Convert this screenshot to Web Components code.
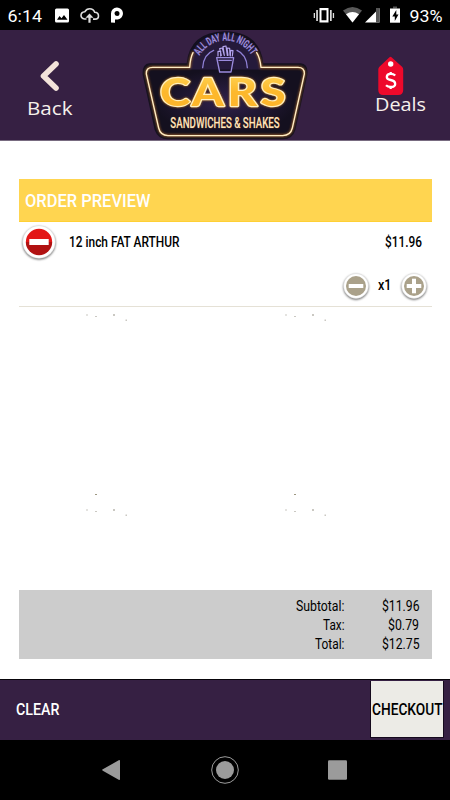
<!DOCTYPE html>
<html lang="en"><head><meta charset="utf-8"><title>Order preview</title>
<style>html,body{margin:0;background:#fff}body{width:450px;height:800px;overflow:hidden}</style></head>
<body><order-app></order-app>
<script>
const define=(name,html,setup)=>customElements.define(name,class extends HTMLElement{
  constructor(){super();this.attachShadow({mode:'open'}).innerHTML=html}
  connectedCallback(){if(setup)setup(this,this.shadowRoot)}
});

/* A line of condensed type, fitted to the width in "w"; "b" is the baseline inside a box of height "h". */
define('fit-text','<style>:host{display:block;flex:none;font-family:Roboto,"Liberation Sans",sans-serif}svg{display:block;overflow:visible}</style><svg><text fill="currentColor" lengthAdjust="spacingAndGlyphs"></text></svg>',(el,root)=>{
  const a=n=>el.getAttribute(n),svg=root.querySelector('svg'),t=root.querySelector('text');
  svg.setAttribute('width',a('w'));svg.setAttribute('height',a('h'));
  t.setAttribute('y',a('b'));t.setAttribute('textLength',a('w'));
  t.setAttribute('font-size',a('size'));t.setAttribute('font-weight',a('weight')||500);
  t.textContent=a('text');
});

define('status-bar',`<style>:host{display:block;height:30px;background:#000}svg{display:block}</style>
<svg width="450" height="30" font-family="Roboto,sans-serif" font-size="16.5" font-weight="400" fill="#fff">
<text x="7.5" y="21.5" textLength="34.5" lengthAdjust="spacingAndGlyphs">6:14</text>
<path fill-rule="evenodd" d="M56.5 8.500h11q1.500 0 1.500 1.500v11q0 1.500-1.500 1.500h-11q-1.500 0-1.500-1.500v-11q0-1.500 1.500-1.500zM57 19.700h10.500l-3.500-4.700-2.500 3.200-2-2.200z"/>
<path d="M86.500 19H84.500q-3.500-.5-3.500-3.700 0-3 3.700-3.500 1.800-3 5-3 3.700 0 5 3.500 3.800.2 3.800 3.600 0 3-3.500 3.200h-2" fill="none" stroke="#ddd" stroke-width="1.600"/>
<path d="M89.500 13.500l4 4.200h-2.900v5h-2.200v-5h-2.900z" fill="#ddd"/>
<path fill-rule="evenodd" d="M111 22.500V13.500a6 6 0 1 1 6.800 6H115v3.200zM117 11a2.500 2.500 0 1 0 .01 5 2.500 2.500 0 0 0 0-5z"/>
<path fill-rule="evenodd" d="M319.500 8h9v14.500h-9zM321.500 10.300v10h5v-10z"/><path d="M316.200 10h1.700v11h-1.700zM313.700 13h1.300v5h-1.300zM330 10h1.700v11H330zM332.800 13h1.300v5h-1.300z" fill="#ddd"/>
<path d="M343 10.500Q352.500 3.500 362 10.500L352.500 22.500z" fill="#595959"/><path d="M346 14.200q6.500-4.400 13 0L352.500 22.500z"/>
<path d="M365 22.500L379.500 8v14.500z"/><path d="M376 8H379.500v14.500H376z" fill="#555"/>
<path d="M393 6.500h4V8.500h-4z" fill="#555"/><path d="M390 8.500h10v14.200h-10z"/><path d="M396.300 10l-4 6.500h2.500v4.500l3.700-6.500h-2.200z" fill="#000"/>
<text x="409.500" y="21.500" textLength="33" lengthAdjust="spacingAndGlyphs">93%</text>
</svg>`);

define('brand-logo',`<style>:host{display:block;width:170px;height:110px}svg{display:block}</style>
<svg width="170" height="110" viewBox="0 6 510 330">
<defs><linearGradient id="g" x1="0" y1="0" x2="0" y2="1"><stop offset="0" stop-color="#ffd95c"/><stop offset=".5" stop-color="#fdb82c"/><stop offset="1" stop-color="#fdb42a"/></linearGradient>
<radialGradient id="d"><stop offset="0" stop-color="#30214c"/><stop offset="1" stop-color="#14101f"/></radialGradient>
<filter id="b" x="-20%" y="-20%" width="140%" height="140%"><feGaussianBlur stdDeviation="3"/></filter></defs>
<path d="M28 106H140Q150 12 255 10Q360 12 370 106H482Q506 108 502 140L466 306Q458 334 428 334H84Q54 334 44 306L8 140Q6 108 28 106z" fill="#14101f"/>
<path d="M155 80Q174 20 255 18Q336 20 352 80L365 125H145z" fill="#251a3b"/>
<path d="M40 125H470L440 318H70z" fill="url(#d)"/>
<g fill="none" stroke-linecap="round" stroke-linejoin="round">
<path d="M159 74Q151 90 149 118H38Q18 118 19 138L56 300Q61 322 84 323H428Q452 322 457 300L493 138Q494 118 474 118H363Q360 90 350 74" stroke="#8a5526" stroke-width="8" filter="url(#b)"/>
<path d="M159 74Q151 90 149 118H38Q18 118 19 138L56 300Q61 322 84 323H428Q452 322 457 300L493 138Q494 118 474 118H363Q360 90 350 74" stroke="#ffedc5" stroke-width="4"/>
<path d="M188 119Q190 79 221 67M322 119Q320 79 291 67" stroke="#8f80d5" stroke-width="4"/>
<path d="M230 89H281L273 132H239zM237 97H274" stroke="#9a8bdd" stroke-width="4"/>
<path d="M234 84V70h8v14M244 82L239 62l8-2 6 22M253 82L249 56l9-2 4 28M264 82L261 60l8 1 1 21M271 84l1-17 7 1-2 16" stroke="#b4a5ef" stroke-width="3.500"/></g>
<path id="arc" d="M179 83A90 90 0 0 1 335 83" fill="none"/>
<text font-family="Roboto,sans-serif" font-size="34" font-weight="700" fill="#aa9be9" stroke="#62539b" stroke-width=".6"><textPath href="#arc" textLength="187" lengthAdjust="spacingAndGlyphs">ALL DAY ALL NIGHT</textPath></text>
<text transform="scale(1.2 1)" x="50 129.500 219 301" y="235" font-family="Lato,sans-serif" font-size="114" font-weight="900" stroke-linejoin="round" fill="url(#g)" stroke="#fff0bf" stroke-width="7" paint-order="stroke" style="filter:drop-shadow(0 0 3px #c47a1d)">CARS</text>
<text x="91" y="299" font-family="Roboto,sans-serif" font-size="46" font-weight="500" textLength="328" lengthAdjust="spacingAndGlyphs" fill="#ffe5bd" stroke="#7a4621" stroke-width="2" paint-order="stroke">SANDWICHES &amp; SHAKES</text>
</svg>`);

define('app-header',`<style>:host{display:grid;grid-template-columns:140px 170px 140px;box-sizing:border-box;height:111px;background:#362043;border-bottom:1px solid #786b80;color:#f6f0eb}
.nav{display:flex;flex-direction:column}.back{padding:30px 0 0 27px}.deals{padding:26px 0 0 64.500px}svg{display:block}.icon{margin-left:1px}fit-text{font-family:"Open Sans",Lato,sans-serif}</style>
<div class="nav back"><svg class="icon" width="44" height="38"><path d="M28 4L15.500 16 28 28" fill="none" stroke="#f3e3da" stroke-width="5.600" stroke-linecap="round" stroke-linejoin="round"/></svg><fit-text text="Back" w="45.500" h="20" b="16.500" size="19" weight="400"></fit-text></div>
<brand-logo></brand-logo>
<div class="nav deals"><svg class="icon" width="49" height="40"><path d="M13.500 1.200Q14.500.2 15.500 1.200L26.300 11Q27.200 12 27.200 13.500V34Q27.200 39 22.200 39H7.300Q2.300 39 2.300 34V13.500Q2.300 12 3.200 11z" fill="#ee092b"/><circle cx="14.700" cy="8" r="2.700" fill="#fff"/><path d="M19.200 19.500Q17.500 17.800 14.700 17.800 10.800 17.800 10.800 20.900 10.800 23.200 14.700 24 19.200 24.900 19.200 28 19.200 31 14.700 31 11.800 31 10 29.200M14.700 16v1.700M14.700 31v2" fill="none" stroke="#fff" stroke-width="2.300"/></svg><fit-text text="Deals" w="51" h="20" b="15.300" size="19" weight="400"></fit-text></div>`);

define('round-button',`<style>:host{display:block;flex:none}svg{display:block;overflow:visible}circle.o{filter:drop-shadow(0 1px 1px #0009)}</style><svg></svg>`,(el,root)=>{
  const red=el.getAttribute('kind')==='remove',plus=el.getAttribute('kind')==='plus',s=red?34:26,c=s/2;
  const svg=root.querySelector('svg');svg.setAttribute('width',s);svg.setAttribute('height',s);
  const sign=red?`<rect x="${c-9.7}" y="${c-3}" width="19.400" height="6" fill="#fff"/>`:`<rect x="${c-7.300}" y="${c-2}" width="14.600" height="4" fill="#fff"/>${plus?`<rect x="${c-2}" y="${c-7.300}" width="4" height="14.600" fill="#fff"/>`:''}`;
  svg.innerHTML=`<defs><linearGradient id="r" x1="0" y1="0" x2="0" y2="1"><stop offset=".5" stop-color="#e31616"/><stop offset=".52" stop-color="#b11111"/></linearGradient></defs><circle class="o" cx="${c}" cy="${c}" r="${red?16.3:12.4}" fill="#fff" stroke="#ddd" stroke-width=".5"/><circle cx="${c}" cy="${c}" r="${red?13.2:10}" fill="${red?'url(#r)':'#aaa18a'}"/>${sign}`;
});

define('order-item',`<style>:host{display:block;box-sizing:border-box;height:85px;border-bottom:1px solid #e5e1d6;color:#000}
.row{display:flex;align-items:flex-start}.main{height:47.500px;padding:3px 9.500px 0 3px}.name{margin:6px auto 0 12.700px}.price{margin-top:6px}
.qty{padding-right:5px;justify-content:flex-end}.count{margin:2.500px 9.500px 0 9px}</style>
<div class="row main"><round-button kind="remove"></round-button><fit-text class="name" text="12 inch FAT ARTHUR" w="110.500" h="20" b="16.300" size="14.500"></fit-text><fit-text class="price" text="$11.96" w="37" h="20" b="16.300" size="14.500"></fit-text></div>
<div class="row qty"><round-button kind="minus"></round-button><fit-text class="count" text="x1" w="13.500" h="20" b="15" size="15"></fit-text><round-button kind="plus"></round-button></div>`);

define('specks-layer',`<style>:host{display:block;height:283px}svg{display:block}</style>
<svg width="413" height="283"><g id="s"><path d="M67 7.500h2v1h-2zM76 9h2v1h-2zM94 7h2v2h-2zM106.500 12.500h1.500v1.500h-1.500z" fill="#cac8c2"/></g><use href="#s" x="199"/><use href="#s" y="195"/><use href="#s" x="199" y="195"/><path d="M76 187h2v1h-2zM275 187h2v1h-2z" fill="#9d9781"/></svg>`);

define('order-totals',`<style>:host{display:block;box-sizing:border-box;height:69px;background:#ccc;padding:6px 12.200px 0 0;color:#000}.row{display:grid;grid-template-columns:1fr 75.300px;height:18.800px;justify-items:end}</style>
<div class="row"><fit-text text="Subtotal:" w="48.500" h="18" b="14.500" size="14.500" weight="400"></fit-text><fit-text text="$11.96" w="37.500" h="18" b="14.500" size="14.500" weight="400"></fit-text></div>
<div class="row"><fit-text text="Tax:" w="21.500" h="18" b="14.500" size="14.500" weight="400"></fit-text><fit-text text="$0.79" w="31" h="18" b="14.500" size="14.500" weight="400"></fit-text></div>
<div class="row"><fit-text text="Total:" w="29.500" h="18" b="14.500" size="14.500" weight="400"></fit-text><fit-text text="$12.75" w="37.500" h="18" b="14.500" size="14.500" weight="400"></fit-text></div>`);

define('action-bar',`<style>:host{display:flex;justify-content:space-between;align-items:flex-start;box-sizing:border-box;height:61px;background:#362043;border-top:1px solid #08050a;padding:1px 6px 0 15.700px;color:#fff}
.clear{margin-top:18px}.checkout{display:flex;box-sizing:border-box;width:74px;height:57px;padding:18px 0 0 .5px;background:#ecebe6;border:1px solid #15091d;border-width:0 1px 1px;color:#000}</style>
<fit-text class="clear" text="CLEAR" w="43.500" h="20" b="16" size="17"></fit-text><div class="checkout"><fit-text text="CHECKOUT" w="70.500" h="20" b="15.500" size="17"></fit-text></div>`);

define('system-nav',`<style>:host{display:grid;grid-template-columns:repeat(3,28px);column-gap:85px;justify-content:center;align-items:center;height:60px;background:#000}svg{display:block}</style>
<svg width="28" height="28" fill="#9b9b9b"><path d="M4.800 14.700Q3.500 14 4.800 13.300L20.700 4.300Q22 3.700 22 5V23Q22 24.300 20.700 23.700z"/></svg>
<svg width="28" height="28"><circle cx="14" cy="14" r="13.300" fill="none" stroke="#9b9b9b" stroke-width="1"/><circle cx="14" cy="14" r="9" fill="#9b9b9b"/></svg>
<svg width="28" height="28"><rect x="4" y="4.300" width="19" height="19.500" rx="1.200" fill="#9b9b9b"/></svg>`);

define('order-app',`<style>:host{display:flex;flex-direction:column;width:450px;height:800px;background:#fff}main{height:538px;box-sizing:border-box;padding:37.500px 18.500px 20px 19px;display:flex;flex-direction:column}
.title{height:43.500px;box-sizing:border-box;background:#ffd550;border-bottom:1px solid #ffd035;padding:11.500px 0 0 6px;color:#fff}</style>
<status-bar></status-bar><app-header></app-header><main><div class="title"><fit-text text="ORDER PREVIEW" w="125.500" h="22" b="17" size="18.700"></fit-text></div><order-item></order-item><specks-layer></specks-layer><order-totals></order-totals></main><action-bar></action-bar><system-nav></system-nav>`);
</script></body></html>
